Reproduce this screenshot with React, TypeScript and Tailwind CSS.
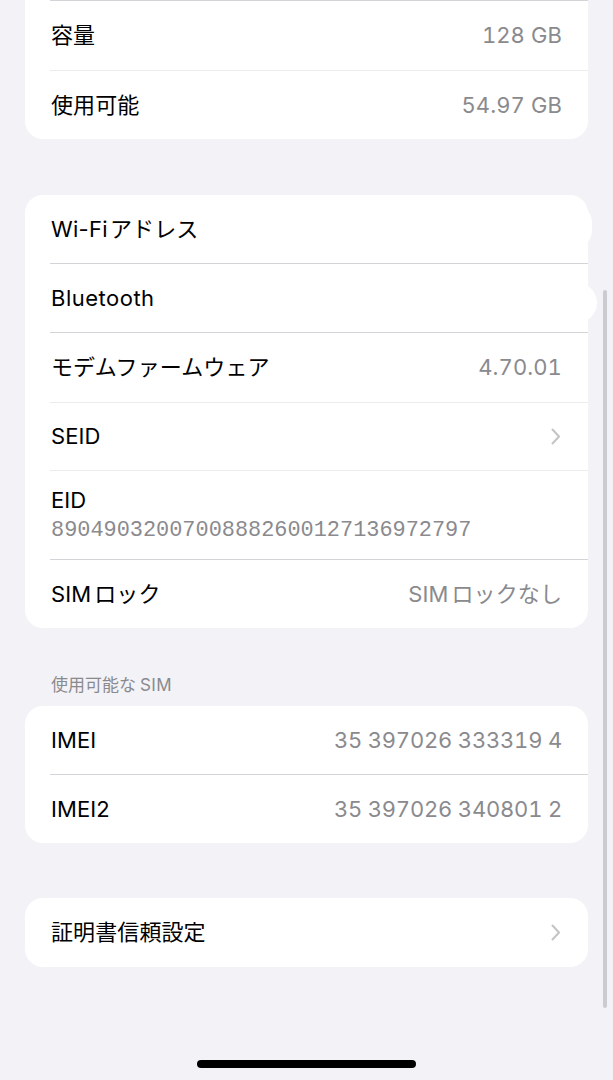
import React from "react";

const font = { fontFamily: '"Inter", "Noto Sans CJK JP", sans-serif' };

function Chevron() {
  return (
    <svg width="10" height="17" viewBox="0 0 10 17" fill="none" className="mr-[1px]">
      <path d="M1.5 1.5 L8 8.5 L1.5 15.5" stroke="#c4c4c7" strokeWidth="2" strokeLinecap="round" strokeLinejoin="round" />
    </svg>
  );
}

function Row({
  label,
  value,
  chevron,
  h = "h-[68px]",
  valueClass = "tracking-[0.1px]",
}: {
  label: React.ReactNode;
  value?: React.ReactNode;
  chevron?: boolean;
  h?: string;
  valueClass?: string;
}) {
  return (
    <div className={`flex items-center justify-between pl-[26px] pr-[26px] ${h}`}>
      <span className="text-[22px] text-black tracking-[0.1px]">{label}</span>
      {value && <span className={`text-[22px] text-[#8a8a8e] tabular-nums ${valueClass}`}>{value}</span>}
      {chevron && <Chevron />}
    </div>
  );
}

function Sep({ faint }: { faint?: boolean }) {
  return <div className={`ml-[25px] h-px ${faint ? "bg-[#ececef]" : "bg-[#d3d3d8]"}`} />;
}

export default function App() {
  return (
    <div className="relative min-h-[1080px] w-full overflow-hidden bg-[#f2f2f7]" style={font}>
      <div className="flex flex-col px-[25px]">
        {/* Card 1 */}
        <div className="rounded-b-[18px] bg-white">
          <Sep />
          <Row label="容量" value="128 GB" h="h-[69px]" />
          <Sep faint />
          <Row label="使用可能" value="54.97 GB" h="h-[68px]" />
        </div>

        {/* Card 2 */}
        <div className="relative mt-[56px] rounded-[18px] bg-white">
          <div className="absolute right-[-4px] top-[8px] h-[47px] w-[40px] rounded-full bg-white" />
          <div className="absolute right-[-9px] top-[88px] h-[40px] w-[40px] rounded-full bg-white" />
          <div className="relative">
            <Row
              label={
                <>
                  <span className="tracking-[0.3px]">Wi-Fi</span>
                  <span className="ml-[2px]">アドレス</span>
                </>
              }
              h="h-[68px]"
            />
            <Sep />
            <Row label={<span className="tracking-[0.5px]">Bluetooth</span>} h="h-[68px]" />
            <Sep />
            <Row label="モデムファームウェア" value="4.70.01" h="h-[69px]" />
            <Sep faint />
            <Row label="SEID" chevron h="h-[67px]" />
            <Sep faint />
            <div className="flex h-[88px] flex-col justify-center gap-[3px] px-[26px]">
              <span className="text-[22px] leading-[28px] text-black">EID</span>
              <span
                className="text-[21.9px] leading-[28px] text-[#8a8a8e]"
                style={{ fontFamily: '"Liberation Mono", monospace' }}
              >
                89049032007008882600127136972797
              </span>
            </div>
            <Sep />
            <Row
              label={
                <>
                  SIM<span className="ml-[3px]">ロック</span>
                </>
              }
              value={
                <>
                  SIM<span className="ml-[3px]">ロックなし</span>
                </>
              }
              h="h-[68px]"
            />
          </div>
        </div>

        {/* Section header */}
        <div className="mt-[46px] h-[22px] pl-[26px] text-[17px] leading-[22px] text-[#8a8a8e]">
          使用可能な<span className="ml-[4px] tracking-[0.4px]">SIM</span>
        </div>

        {/* Card 3 */}
        <div className="mt-[10px] rounded-[18px] bg-white">
          <Row label="IMEI" value="35 397026 333319 4" h="h-[68px]" valueClass="tracking-[-0.2px]" />
          <Sep />
          <Row label="IMEI2" value="35 397026 340801 2" h="h-[68px]" valueClass="tracking-[-0.2px]" />
        </div>

        {/* Card 4 */}
        <div className="mt-[55px] rounded-[18px] bg-white">
          <Row label="証明書信頼設定" chevron h="h-[69px]" />
        </div>
      </div>

      {/* Scrollbar */}
      <div className="absolute right-[6px] top-[290px] h-[718px] w-[4px] rounded-full bg-[#cbcbd0]" />

      {/* Home indicator */}
      <div className="absolute bottom-[12px] left-[197px] h-[8px] w-[219px] rounded-full bg-black" />
    </div>
  );
}
